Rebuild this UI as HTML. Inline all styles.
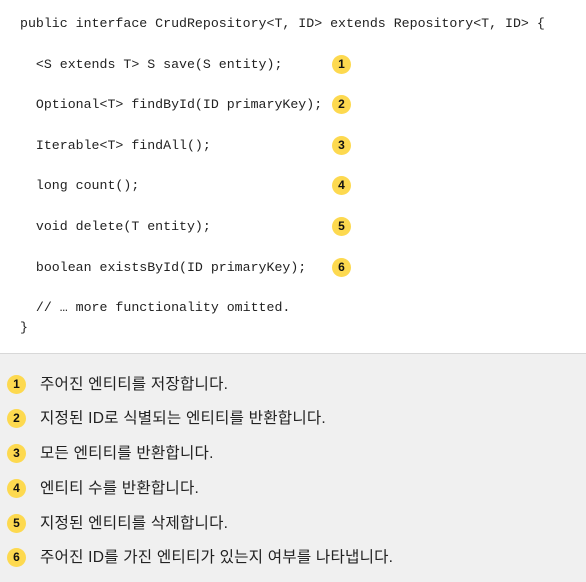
<!DOCTYPE html>
<html><head><meta charset="utf-8"><style>
body{margin:0;width:586px;height:581px;background:#fff;overflow:hidden;font-family:"Liberation Sans","Noto Sans CJK KR",sans-serif}
pre{margin:0;position:absolute;left:20px;top:14px;font-family:"Liberation Mono",monospace;font-size:13.25px;line-height:20.3px;color:#222}
.b{position:absolute;width:19px;height:19px;border-radius:50%;background:#fdd94f;color:#111;font:bold 12px/19px "Liberation Sans",sans-serif;text-align:center}
.bot{position:absolute;left:0;top:353px;width:586px;height:228px;background:#f0f0f0;border-top:1px solid #d8d8d8}
.it{position:absolute;left:40px;font-size:15.6px;letter-spacing:0.2px;color:#222;line-height:20px}
</style></head><body>
<pre>public interface CrudRepository&lt;T, ID&gt; extends Repository&lt;T, ID&gt; {

  &lt;S extends T&gt; S save(S entity);

  Optional&lt;T&gt; findById(ID primaryKey);

  Iterable&lt;T&gt; findAll();

  long count();

  void delete(T entity);

  boolean existsById(ID primaryKey);

  // … more functionality omitted.
}</pre>
<div class="b" style="left:332px;top:55px">1</div>
<div class="b" style="left:332px;top:95px">2</div>
<div class="b" style="left:332px;top:136px">3</div>
<div class="b" style="left:332px;top:176px">4</div>
<div class="b" style="left:332px;top:217px">5</div>
<div class="b" style="left:332px;top:258px">6</div>
<div class="bot"></div>
<div class="b" style="left:7px;top:375px">1</div><div class="it" style="top:375px">주어진 엔티티를 저장합니다.</div>
<div class="b" style="left:7px;top:409px">2</div><div class="it" style="top:409px">지정된 ID로 식별되는 엔티티를 반환합니다.</div>
<div class="b" style="left:7px;top:444px">3</div><div class="it" style="top:444px">모든 엔티티를 반환합니다.</div>
<div class="b" style="left:7px;top:479px">4</div><div class="it" style="top:479px">엔티티 수를 반환합니다.</div>
<div class="b" style="left:7px;top:514px">5</div><div class="it" style="top:514px">지정된 엔티티를 삭제합니다.</div>
<div class="b" style="left:7px;top:548px">6</div><div class="it" style="top:548px">주어진 ID를 가진 엔티티가 있는지 여부를 나타냅니다.</div>
</body></html>
